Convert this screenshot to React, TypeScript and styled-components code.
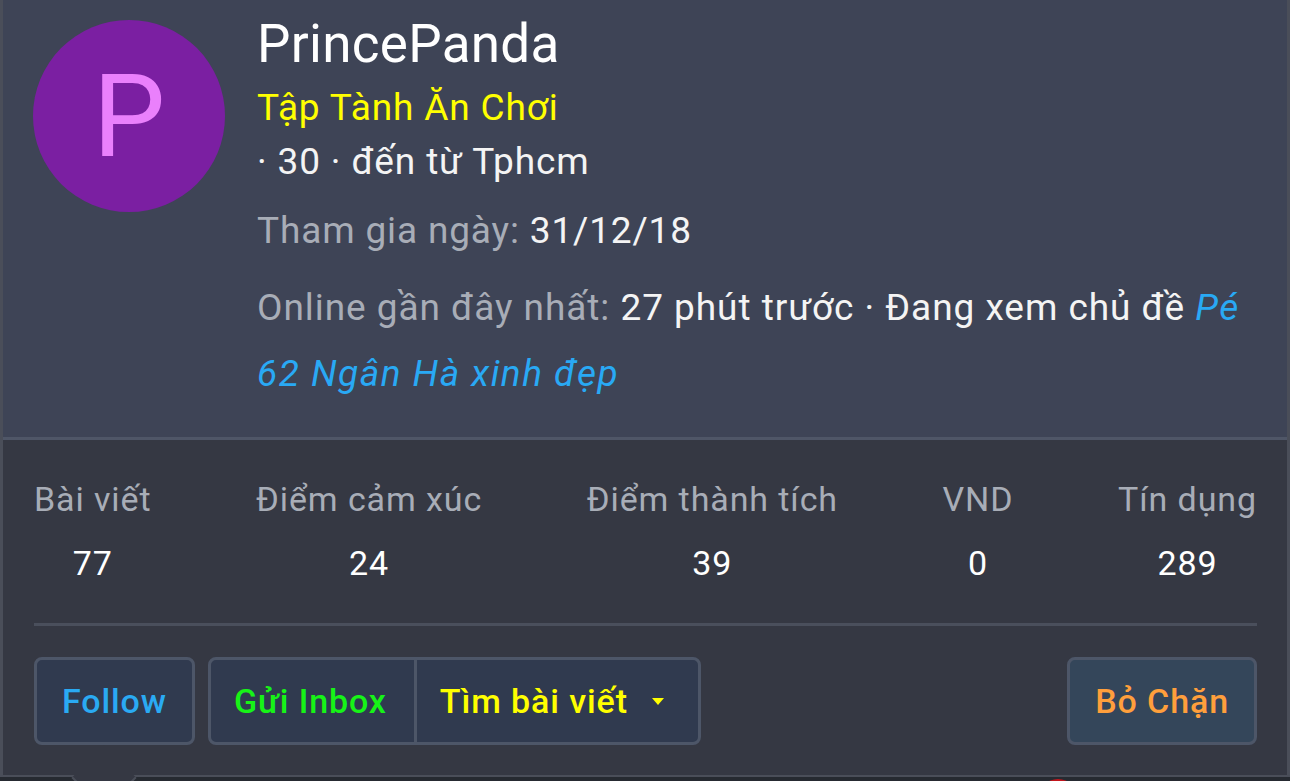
import React from "react";
import styled, { createGlobalStyle } from "styled-components";

const GlobalStyle = createGlobalStyle`
  html, body {
    margin: 0;
    padding: 0;
    background: #262a31;
  }
  body {
    font-family: Roboto, "Noto Sans", "Liberation Sans", sans-serif;
    overflow: hidden;
  }
`;

const Page = styled.div`
  width: 1290px;
  height: 781px;
  display: flex;
  flex-direction: column;
  overflow: hidden;
`;

const Card = styled.div`
  position: relative;
  width: 1290px;
  box-sizing: border-box;
  border-left: 3px solid #4a4e59;
  border-right: 3px solid #4a4e59;
  border-bottom: 2px solid #4a4e59;
  background: #353843;

  &::after {
    content: "";
    position: absolute;
    left: 78px;
    bottom: -26px;
    width: 44px;
    height: 44px;
    transform: rotate(45deg);
    background: #353843;
    border-right: 2px solid #4a4e59;
    border-bottom: 2px solid #4a4e59;
    z-index: 2;
  }
`;

const Header = styled.div`
  display: flex;
  align-items: flex-start;
  gap: 32px;
  padding: 12px 30px 30px 30px;
  background: #3e4456;
  border-bottom: 3px solid #4f5667;
`;

const Avatar = styled.div`
  flex: none;
  width: 192px;
  height: 192px;
  margin-top: 8px;
  border-radius: 50%;
  background: #7b1fa2;
  color: #ea80fc;
  font-size: 115px;
  line-height: 1;
  display: flex;
  align-items: center;
  justify-content: center;
`;

const Info = styled.div`
  display: flex;
  flex-direction: column;
  min-width: 0;
  flex: 1;
`;

const Name = styled.div`
  font-size: 53px;
  line-height: 64px;
  letter-spacing: 0.3px;
  color: #ffffff;
`;

const Line = styled.div<{ $color?: string; $gap?: number }>`
  font-size: 37px;
  line-height: 54px;
  letter-spacing: 0.85px;
  color: ${(p) => p.$color || "#f4f4f4"};
  margin-top: ${(p) => p.$gap || 0}px;
`;

const Muted = styled.span`
  color: #a8adb7;
`;

const Online = styled.div`
  font-size: 37px;
  line-height: 66px;
  letter-spacing: 0.95px;
  color: #f4f4f4;
  margin-top: 17px;
`;

const TopicLink = styled.a`
  color: #29a9f4;
  font-style: italic;
  letter-spacing: 1.5px;
  text-decoration: none;
`;

const Body = styled.div`
  padding: 32px 30px 30px 31px;
`;

const Stats = styled.div`
  display: flex;
  justify-content: space-between;
`;

const Stat = styled.div`
  display: flex;
  flex-direction: column;
  align-items: center;
  gap: 10px;
  font-size: 34px;
  line-height: 54px;
  letter-spacing: 0.9px;
`;

const StatLabel = styled.div`
  color: #a8adb7;
`;

const StatValue = styled.div`
  color: #ffffff;
`;

const Divider = styled.div`
  height: 3px;
  background: #4a4f5c;
  margin: 33px 0 31px 0;
`;

const Actions = styled.div`
  display: flex;
  align-items: center;
  gap: 13px;
`;

const Button = styled.button<{ $color: string; $bg?: string }>`
  height: 88px;
  box-sizing: border-box;
  padding: 0 25px;
  border: 3px solid #4d5668;
  border-radius: 8px;
  background: ${(p) => p.$bg || "#303a4f"};
  color: ${(p) => p.$color};
  font-family: Roboto, "Noto Sans", sans-serif;
  font-size: 34px;
  font-weight: 500;
  letter-spacing: 0.9px;
  display: flex;
  align-items: center;
`;

const Group = styled.div`
  display: flex;
  height: 88px;
  box-sizing: border-box;
  border: 3px solid #4d5668;
  border-radius: 8px;
  background: #303a4f;
  overflow: hidden;
`;

const GroupItem = styled.div<{ $color: string; $divider?: boolean }>`
  display: flex;
  align-items: center;
  gap: 24px;
  padding: 0 ${(p) => (p.$divider ? 34 : 27)}px 0 23px;
  color: ${(p) => p.$color};
  font-size: 34px;
  font-weight: 500;
  letter-spacing: 0.9px;
  border-left: ${(p) => (p.$divider ? "3px solid #4d5668" : "none")};
`;

const Caret = styled.span`
  width: 0;
  height: 0;
  border-left: 6px solid transparent;
  border-right: 6px solid transparent;
  border-top: 7px solid currentColor;
`;

const Spacer = styled.div`
  flex: 1;
`;

const Backdrop = styled.div`
  flex: 1;
  display: flex;
  padding-left: 1038px;
  overflow: hidden;
`;

const RedDot = styled.div`
  width: 40px;
  height: 40px;
  margin-top: 2px;
  border-radius: 50%;
  background: #c4151c;
`;

const stats = [
  { label: "Bài viết", value: "77" },
  { label: "Điểm cảm xúc", value: "24" },
  { label: "Điểm thành tích", value: "39" },
  { label: "VND", value: "0" },
  { label: "Tín dụng", value: "289" },
];

export default function App() {
  return (
    <Page>
      <GlobalStyle />
      <Card>
        <Header>
          <Avatar>P</Avatar>
          <Info>
            <Name>PrincePanda</Name>
            <Line $color="#ffff00" $gap={5}>
              Tập Tành Ăn Chơi
            </Line>
            <Line>· 30 · đến từ Tphcm</Line>
            <Line $gap={15}>
              <Muted>Tham gia ngày:</Muted> 31/12/18
            </Line>
            <Online>
              <Muted>Online gần đây nhất:</Muted> 27 phút trước · Đang xem
              chủ đề <TopicLink href="#">Pé 62 Ngân Hà xinh đẹp</TopicLink>
            </Online>
          </Info>
        </Header>
        <Body>
          <Stats>
            {stats.map((s) => (
              <Stat key={s.label}>
                <StatLabel>{s.label}</StatLabel>
                <StatValue>{s.value}</StatValue>
              </Stat>
            ))}
          </Stats>
          <Divider />
          <Actions>
            <Button $color="#2aaaf3">Follow</Button>
            <Group>
              <GroupItem $color="#17f317">Gửi Inbox</GroupItem>
              <GroupItem $color="#ffff00" $divider>
                Tìm bài viết
                <Caret />
              </GroupItem>
            </Group>
            <Spacer />
            <Button $color="#ff9f3c" $bg="#34465a">
              Bỏ Chặn
            </Button>
          </Actions>
        </Body>
      </Card>
      <Backdrop>
        <RedDot />
      </Backdrop>
    </Page>
  );
}
